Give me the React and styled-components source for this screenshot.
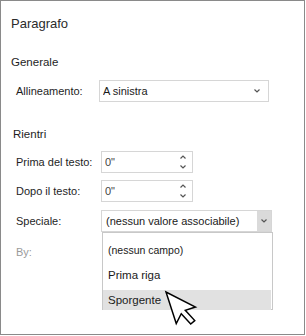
import styled, { createGlobalStyle } from "styled-components";

const Global = createGlobalStyle`
  body {
    margin: 0;
    background: #fff;
    font-family: "Liberation Sans", Arial, sans-serif;
    color: #1e1e1e;
  }
`;

const Panel = styled.div`
  position: relative;
  box-sizing: border-box;
  width: 305px;
  height: 335px;
  border: 1px solid #8a8a8a;
  padding: 15px 0 0 10px;
  font-size: 11px;
`;

const Title = styled.div`
  height: 16px;
  line-height: 16px;
  font-size: 13px;
  color: #2b2b2b;
`;

const Heading = styled.div`
  height: 14px;
  line-height: 14px;
  margin-top: ${(p) => p.$top}px;
  padding-left: ${(p) => p.$indent}px;
  font-size: 11.5px;
`;

const Row = styled.div`
  position: relative;
  display: grid;
  grid-template-columns: ${(p) => p.$label}px auto;
  align-items: center;
  height: 22px;
  margin-top: ${(p) => p.$top}px;
  padding-left: 5px;
`;

const Label = styled.span`
  color: ${(p) => (p.$muted ? "#9a9a9a" : "#1e1e1e")};
`;

const Field = styled.div`
  box-sizing: border-box;
  display: flex;
  align-items: center;
  width: ${(p) => p.$w}px;
  height: 22px;
  border: 1px solid #d6d6d6;
  padding-left: ${(p) => p.$pad ?? 3}px;
  background: #fff;
  color: ${(p) => p.$color || "#1a1a1a"};
`;

const Value = styled.span`
  flex: 1;
  white-space: nowrap;
  overflow: hidden;
`;

const Caret = styled.div`
  display: flex;
  align-items: center;
  justify-content: center;
  width: 14px;
  height: 100%;
  background: ${(p) => (p.$shaded ? "#dadada" : "transparent")};
  margin-right: ${(p) => (p.$shaded ? 0 : 4)}px;
`;

const Spin = styled.div`
  display: flex;
  flex-direction: column;
  justify-content: space-between;
  height: 14px;
  margin-right: 6px;
`;

const List = styled.div`
  position: absolute;
  left: 91px;
  top: 22px;
  box-sizing: border-box;
  width: 171px;
  height: 78px;
  border: 1px solid #c8c8c8;
  background: #fff;
  padding-top: 7px;
  display: flex;
  flex-direction: column;
  gap: 5px;
  z-index: 2;
`;

const Item = styled.div`
  height: 20px;
  line-height: 20px;
  padding-left: 5px;
  margin-right: 1px;
  font-size: ${(p) => (p.$small ? 10.5 : 11.5)}px;
  background: ${(p) => (p.$active ? "#e1e1e1" : "transparent")};
  color: #1a1a1a;
`;

const Pointer = styled.svg`
  position: absolute;
  left: 158px;
  top: 285px;
  z-index: 3;
`;

const Chevron = ({ up }) => (
  <svg width="6" height="4" viewBox="0 0 6 4">
    <polyline
      points={up ? "0.5,3.5 3,1 5.5,3.5" : "0.5,0.5 3,3 5.5,0.5"}
      fill="none"
      stroke="#555"
      strokeWidth="1.2"
    />
  </svg>
);

export default function App() {
  return (
    <>
      <Global />
      <Panel>
        <Title>Paragrafo</Title>

        <Heading $top={23} $indent={0}>Generale</Heading>
        <Row $label={83} $top={11}>
          <Label>Allineamento:</Label>
          <Field $w={170}>
            <Value>A sinistra</Value>
            <Caret>
              <Chevron />
            </Caret>
          </Field>
        </Row>

        <Heading $top={25} $indent={2}>Rientri</Heading>
        <Row $label={85} $top={10}>
          <Label>Prima del testo:</Label>
          <Field $w={92} $color="#444">
            <Value>0"</Value>
            <Spin>
              <Chevron up />
              <Chevron />
            </Spin>
          </Field>
        </Row>
        <Row $label={85} $top={7}>
          <Label>Dopo il testo:</Label>
          <Field $w={92} $color="#444">
            <Value>0"</Value>
            <Spin>
              <Chevron up />
              <Chevron />
            </Spin>
          </Field>
        </Row>
        <Row $label={85} $top={8}>
          <Label>Speciale:</Label>
          <Field $w={171} $pad={4}>
            <Value>(nessun valore associabile)</Value>
            <Caret $shaded>
              <Chevron />
            </Caret>
          </Field>
          <List>
            <Item $small>(nessun campo)</Item>
            <Item>Prima riga</Item>
            <Item $active>Sporgente</Item>
          </List>
        </Row>
        <Row $label={85} $top={9}>
          <Label $muted>By:</Label>
        </Row>

        <Pointer width="40" height="48" viewBox="0 0 40 48">
          <g transform="translate(7 6) rotate(-18) scale(1.95)">
            <polygon
              points="0,0 0,17 4,13 7,19.5 9.5,18.5 6.5,12 12,12"
              fill="#fff"
              stroke="#000"
              strokeWidth="0.75"
              strokeLinejoin="miter"
            />
          </g>
        </Pointer>
      </Panel>
    </>
  );
}
